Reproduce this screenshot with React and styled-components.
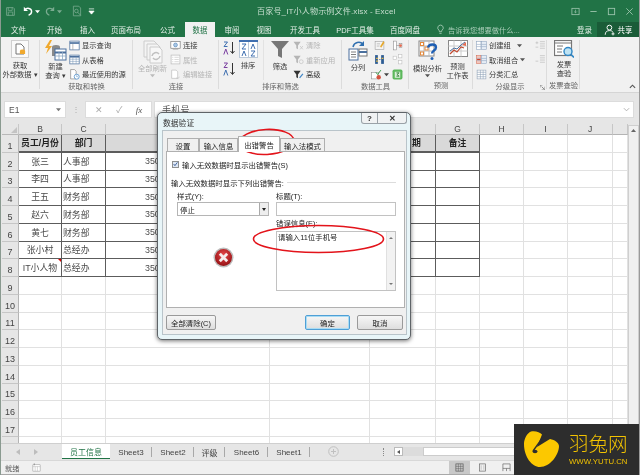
import React from "react";
import styled, { createGlobalStyle } from "styled-components";

const Global = createGlobalStyle`
  html, body { margin: 0; padding: 0; background: #fff; }
  * { box-sizing: border-box; }
  #root { width: 640px; height: 475px; overflow: hidden; }
`;
const cjk = `"Liberation Sans", "Noto Sans CJK SC", sans-serif`;

const Window = styled.div`
  position: relative; width: 640px; height: 475px; display: flex; flex-direction: column;
  font-family: ${cjk}; font-size: 7.3px; color: #3a3a3a; overflow: hidden; background: #e6e6e6;
  filter: blur(0.35px); border-left: 1px solid #8a9a90; border-right: 1px solid #9a9a9a;
`;
const TitleBar = styled.header`
  height: 22px; background: #217346; display: flex; align-items: center; position: relative; padding: 0 0 0 3px;
`;
const Qat = styled.div`display: flex; align-items: center; gap: 0;`;
const QatBtn = styled.span`
  width: ${p => p.$w}px; height: 14px; display: flex; align-items: center; justify-content: center;
  opacity: ${p => (p.$dim ? 0.4 : 1)};
`;
const DocTitle = styled.div`
  position: absolute; left: 256px; top: 5px; font-size: 8.1px; letter-spacing: .1px; color: #c9dfd1; white-space: nowrap;
`;
const WinControls = styled.div`margin-left: auto; display: flex; align-items: center; padding-right: 1px;`;
const WinBtn = styled.span`width: 18px; height: 18px; display: flex; align-items: center; justify-content: center;`;

const TabBar = styled.nav`height: 15px; background: #217346; display: flex; align-items: stretch;`;
const RibbonTab = styled.div`
  width: ${p => p.$w}px; display: flex; align-items: center; justify-content: center; white-space: nowrap;
  color: ${p => (p.$active ? "#217346" : "#e4efe8")}; background: ${p => (p.$active ? "#f1f1f1" : "transparent")};
  font-size: 7.5px;
`;
const TellMe = styled.div`
  display: flex; align-items: center; gap: 2px; margin-left: 4px; color: #a9cdb8; font-size: 7.3px; white-space: nowrap;
`;
const Login = styled.div`margin-left: auto; display: flex; align-items: center; color: #e4efe8; font-size: 7.5px; padding-right: 5px;`;
const Share = styled.div`
  width: 42px; background: #1a5c38; color: #fff; font-size: 7.5px; display: flex; align-items: center; justify-content: center; gap: 2px;
`;

const Ribbon = styled.section`height: 56px; background: #f1f1f1; display: flex; border-bottom: 1px solid #d5d5d5; position: relative;`;
const Group = styled.div`
  width: ${p => p.$w}px; display: flex; flex-direction: column; padding: 1px 0 1px; position: relative;
  &::after { content: ""; position: absolute; right: 0; top: 3px; bottom: 3px; width: 1px; background: #dcdcdc; }
`;
const GroupBody = styled.div`flex: 1; display: flex; padding-left: ${p => p.$pl || 0}px; gap: ${p => p.$gap || 0}px;`;
const GroupLabel = styled.div`height: 10px; line-height: 10px; text-align: center; color: #666; font-size: 7.3px; white-space: nowrap;`;
const BigBtn = styled.div`
  width: ${p => p.$w || 30}px; display: flex; flex-direction: column; align-items: center; flex: none; padding-top: 2px;
  line-height: 9px; font-size: 7.3px; text-align: center; color: ${p => (p.$dim ? "#b5b5b5" : "#3a3a3a")}; white-space: nowrap;
  svg { margin-bottom: ${p => p.$mb ?? 2}px; flex: none; }
`;
const Stack = styled.div`display: flex; flex-direction: column; justify-content: flex-start; flex: none; width: ${p => (p.$w ? p.$w + "px" : "auto")};`;
const SmallBtn = styled.div`
  height: 14.5px; display: flex; align-items: center; gap: 2px; white-space: nowrap; font-size: 7.3px;
  color: ${p => (p.$dim ? "#b5b5b5" : "#3a3a3a")};
`;
const Collapse = styled.span`position: absolute; right: 3px; bottom: 2px; display: flex;`;
const Launcher = styled.span`position: absolute; right: 2px; bottom: 2px; display: flex;`;
const Divider = styled.div`width: 1px; margin: 2px 4px 2px 5px; background: #e2e2e2; flex: none;`;

const FormulaBar = styled.section`height: 31px; background: #e6e6e6; padding: 8px 5px 6px 3px; display: flex; align-items: stretch;`;
const NameBox = styled.div`
  width: 62px; background: #fff; border: 1px solid #dcdcdc; display: flex; align-items: center; justify-content: space-between;
  padding: 0 4px; font-size: 8.5px; color: #555;
`;
const Grip = styled.div`width: 19px; display: flex; align-items: center; justify-content: center; color: #aaa; font-size: 8px;`;
const FxBox = styled.div`
  width: 67px; background: #fff; border: 1px solid #dcdcdc; display: flex; align-items: center; justify-content: space-around; padding: 0 2px;
  color: #aaa; font-size: 9px;
`;
const FormulaInput = styled.div`
  flex: 1; margin-left: 2px; background: #fff; border: 1px solid #dcdcdc; display: flex; align-items: center; justify-content: space-between;
  padding: 0 3px 0 7px; font-size: 9px; color: #555;
`;

const SheetArea = styled.section`height: 319px; display: flex; background: #e6e6e6; padding-left: 1px;`;
const SheetGrid = styled.div`
  display: grid; grid-template-columns: 17px 43px 44px 164px 100px 66px 44px 44px 44px 45px 15px;
  grid-template-rows: 11px repeat(18, 17.76px); height: 319px; overflow: hidden; background: #fff; width: 626px; flex: none;
`;
const Corner = styled.div`background: #e6e6e6; border-right: 1px solid #c8c8c8; border-bottom: 1px solid #b8b8b8; display: flex; align-items: flex-end; justify-content: flex-end; padding: 1px;`;
const ColHead = styled.div`
  background: #e6e6e6; border-right: 1px solid #c6c6c6; border-bottom: 1px solid #b4b4b4;
  display: flex; align-items: center; justify-content: center; font-size: 8.5px; color: #444;
`;
const RowHead = styled.div`
  background: #e6e6e6; border-right: 1px solid #b4b4b4; border-bottom: 1px solid #c6c6c6;
  display: flex; align-items: flex-end; justify-content: center; font-size: 9px; color: #444; padding-bottom: 1px;
`;
const Cell = styled.div`
  background: #fff; border-right: 1px solid #e1e1e1; border-bottom: 1px solid #e1e1e1; overflow: hidden; white-space: nowrap;
`;
const DataCell = styled.div`
  position: relative; background: ${p => (p.$head ? "#d9d9d9" : "#fff")}; color: ${p => (p.$head ? "#222" : "#4a4a4a")};
  font-weight: ${p => (p.$head ? 700 : 400)};
  border-right: 1.2px solid #5c5c5c; border-bottom: ${p => (p.$head ? 2 : 1.2)}px solid #5c5c5c;
  display: flex; align-items: center; justify-content: ${p => p.$align || "center"}; padding-left: ${p => p.$pl || 0}px;
  padding-right: ${p => p.$pr || 0}px; overflow: hidden; white-space: nowrap; font-size: 8.9px;
`;
const Comment = styled.span`
  position: absolute; top: 0; right: 0; width: 0; height: 0; border-top: 3px solid #d00; border-left: 3px solid transparent;
`;
const VScroll = styled.div`
  width: 11px; margin: 1px 0 0 0; background: #f0f0f0; border: 1px solid #cfcfcf; display: flex; flex-direction: column; align-items: center; padding-top: 3px;
`;

const SheetTabs = styled.nav`height: 17px; background: #e6e6e6; display: flex; align-items: stretch; border-top: 1px solid #cfcfcf;`;
const NavArrows = styled.div`width: 61px; display: flex; align-items: center; padding-left: 15px; gap: 14px;`;
const SheetTab = styled.div`
  width: ${p => p.$w}px; display: flex; align-items: center; justify-content: center; font-size: 8px;
  background: ${p => (p.$active ? "#fff" : "transparent")}; color: ${p => (p.$active ? "#217346" : "#444")};
  border-bottom: ${p => (p.$active ? "1.5px solid #217346" : "none")};
  margin-bottom: ${p => (p.$active ? 1 : 0)}px;
  position: relative;
  &::after { content: ""; display: ${p => (p.$active ? "none" : "block")}; position: absolute; right: 0; top: 3px; bottom: 3px; width: 1px; background: #a8a8a8; }
`;
const SheetTools = styled.div`flex: 1; display: flex; align-items: center; padding: 0 0 1px 18px;`;
const AddSheet = styled.span`width: 11px; height: 11px; display: flex;`;
const Dots = styled.span`width: 2px; height: 8px; margin-left: 44px; border-left: 1px dotted #888;`;
const ScrollArrow = styled.span`
  width: 9px; height: 9px; margin-left: 9px; background: #fff; border: 1px solid #bbb; display: flex; align-items: center; justify-content: center;
  &::after { content: ""; border-right: 3px solid #555; border-top: 2px solid transparent; border-bottom: 2px solid transparent; }
`;
const TrackGrey = styled.div`width: 20px; height: 9px; background: #dcdcdc;`;
const ThumbWhite = styled.div`flex: 1; height: 9px; background: #fff; border: 1px solid #ccc;`;

const StatusBar = styled.footer`
  height: 15px; background: #f0f0f0; border-top: 1px solid #d8d8d8; border-bottom: 1px solid #a8a8a8; display: flex; align-items: center; padding-left: 4px; font-size: 7.2px; color: #555;
`;
const StatusIcon = styled.span`margin-left: 13px; display: flex;`;
const ViewBtns = styled.div`margin-left: 408px; display: flex; align-self: stretch;`;
const ViewBtn = styled.span`
  width: ${p => (p.$on ? 21 : 24)}px; display: flex; align-items: center; justify-content: center; background: ${p => (p.$on ? "#c8c8c8" : "transparent")};
`;

/* Dialog */
const Dialog = styled.div`
  position: absolute; left: 156px; top: 112px; width: 254px; height: 228px; border: 1px solid #5f6468; border-radius: 5px;
  background: #e8f5f8; box-shadow: 0 1px 4px rgba(0,0,0,.55); padding: 0 3px 4px 4px; display: flex; flex-direction: column; color: #222;
`;
const DlgTitleRow = styled.div`height: 17px; display: flex; align-items: flex-start; justify-content: space-between; flex: none;`;
const DlgTitle = styled.div`font-size: 7.8px; padding: 4px 0 0 1px; color: #333;`;
const DlgCtrls = styled.div`display: flex;`;
const DlgCtrl = styled.span`
  width: ${p => p.$w}px; height: 11px; display: flex; align-items: center; justify-content: center; background: #f0f2f3;
  border: 1px solid #9aa2a8; border-top: none; border-left: ${p => (p.$first ? "1px solid #9aa2a8" : "none")};
  border-radius: ${p => (p.$first ? "0 0 0 3px" : "0 0 3px 0")}; font-size: 8px; color: #333; font-weight: 700;
`;
const DlgBody = styled.div`flex: 1; background: #f0f0f0; border: 1px solid #b9c4ca; padding: 5px 1px 4px 3px; display: flex; flex-direction: column;`;
const DlgTabs = styled.div`display: flex; align-items: flex-end; height: 16px; flex: none; padding-left: 1px; position: relative; z-index: 1;`;
const DlgTab = styled.div`
  width: ${p => p.$w}px; height: ${p => (p.$active ? 16 : 14)}px; background: ${p => (p.$active ? "#fff" : "#f0f0f0")};
  border: 1px solid #b0b0b0; border-bottom: ${p => (p.$active ? "none" : "1px solid #b0b0b0")};
  display: flex; align-items: center; justify-content: center; font-size: 7.4px; color: #222; white-space: nowrap;
`;
const DlgPanel = styled.div`
  height: 157px; margin-top: -1px; background: #fff; border: 1px solid #b0b0b0; padding: 8px 8px 0 4px; display: flex; flex-direction: column; flex: none; font-size: 7.4px;
`;
const CheckRow = styled.label`display: flex; align-items: center; gap: 3px; height: 8px; white-space: nowrap;`;
const CheckBox = styled.span`
  width: 7px; height: 7px; border: 1px solid #8e8f8f; background: #dfe8f5; display: flex; align-items: center; justify-content: center; margin-left: 1px;
`;
const Legend = styled.div`display: flex; align-items: center; gap: 3px; margin-top: 9px; height: 10px; white-space: nowrap;`;
const LegendRule = styled.span`flex: 1; height: 1px; background: #dcdcdc;`;
const FormCols = styled.div`display: flex; padding-left: 6px; gap: 7px; margin-top: 4px;`;
const LeftCol = styled.div`width: 92px; display: flex; flex-direction: column; flex: none;`;
const RightCol = styled.div`flex: 1; display: flex; flex-direction: column;`;
const FieldLabel = styled.div`height: 11px; line-height: 11px; margin-top: ${p => p.$mt || 0}px; margin-bottom: ${p => p.$mb || 0}px; color: #222;`;
const Select = styled.div`
  height: 14px; border: 1px solid #b5b5b5; display: flex; align-items: center; justify-content: space-between; padding-left: 2px; background: #fff;
`;
const SelectArrow = styled.span`
  width: 9px; height: 12px; background: #eee; border-left: 1px solid #aaa; display: flex; align-items: center; justify-content: center;
  &::after { content: ""; border-top: 3px solid #222; border-left: 2.5px solid transparent; border-right: 2.5px solid transparent; }
`;
const TextInput = styled.div`height: 14px; border: 1px solid #c2c2c2; background: #fff;`;
const TextArea = styled.div`
  height: 60px; border: 1px solid #c2c2c2; background: #fff; display: flex; justify-content: space-between; padding-left: 1px; padding-top: 1px; line-height: 10px;
`;
const AreaScroll = styled.span`
  width: 9px; margin-top: -1px; background: #f2f2f2; border-left: 1px solid #e0e0e0; display: flex; flex-direction: column; align-items: center; justify-content: space-between; padding: 5px 0;
  i { display: block; width: 0; height: 0; border-left: 2px solid transparent; border-right: 2px solid transparent; }
  i:first-child { border-bottom: 2.5px solid #777; }
  i:last-child { border-top: 2.5px solid #777; }
`;
const ErrorMark = styled.div`margin: 31px 0 0 36px; width: 21px; height: 21px; display: flex;`;
const DlgFooter = styled.div`display: flex; align-items: flex-start; margin-top: 7px; padding-right: 2px;`;
const DlgBtn = styled.button`
  font: inherit; font-size: 7.4px; color: #222; width: ${p => p.$w}px; height: 15px; padding: 0; margin-left: ${p => p.$ml || 0}px; border-radius: 2px;
  border: 1px solid ${p => (p.$primary ? "#4f9fd6" : "#9a9a9a")};
  background: linear-gradient(#f6f6f6, #dedede);
  box-shadow: ${p => (p.$primary ? "inset 0 0 0 1px #a9dcf4" : "none")};
`;
const Annot = styled.svg`position: absolute; pointer-events: none; overflow: visible;`;

/* Logo watermark */
const Logo = styled.div`
  position: absolute; right: -1px; bottom: 0; width: 126px; height: 51px; background: #2d2d2d; display: flex; align-items: center; padding-left: 10px; gap: 9px;
`;
const LogoText = styled.div`display: flex; flex-direction: column; color: #f3c300; align-items: center;`;
const LogoCn = styled.div`font-size: 19.5px; line-height: 23px; font-weight: 300; white-space: nowrap;`;
const LogoEn = styled.div`font-size: 7.8px; line-height: 10px; white-space: nowrap; margin-top: 1px;`;

const I = ({ s = 12, w, h, vb, children }) => (
  <svg width={w || s} height={h || s} viewBox={vb || "0 0 20 20"} fill="none">{children}</svg>
);

const SaveI = () => <I s={11}><path d="M3 3h12l2 2v12H3z" stroke="#fff" strokeWidth="1.5"/><path d="M6 3v5h7V3M6 17v-6h8v6" stroke="#fff" strokeWidth="1.3"/></I>;
const UndoI = ({ c = "#fff" }) => <I s={12}><path d="M5 8c3-4 11-3 11 3 0 3-2 5-5 6" stroke={c} strokeWidth="2.4"/><path d="M3 3v7h7z" fill={c}/></I>;
const RedoI = () => <I s={12}><path d="M15 8c-3-4-11-3-11 3 0 3 2 5 5 6" stroke="#fff" strokeWidth="2"/><path d="M17 3v7h-7z" fill="#fff"/></I>;
const Caret = ({ c = "#fff", s = 5 }) => <I s={s} vb="0 0 6 6"><path d="M0 1.5h6L3 5z" fill={c}/></I>;
const PreviewI = () => <I s={12}><path d="M4 2h9l3 3v13H4z" stroke="#fff" strokeWidth="1.3"/><circle cx="9" cy="10" r="3" stroke="#fff" strokeWidth="1.3"/><path d="M11 12l5 5" stroke="#fff" strokeWidth="1.5"/></I>;
const CustomizeI = () => <I s={7} vb="0 0 8 8"><path d="M1 1h6M1 3.5h6L4 7z" stroke="#fff" fill="#fff" strokeWidth=".8"/></I>;
const BulbI = () => <I s={11}><path d="M10 2a5 5 0 0 0-3 9c1 1 1 2 1 3h4c0-1 0-2 1-3a5 5 0 0 0-3-9zM8 17h4" stroke="#b5d5c2" strokeWidth="1.4"/></I>;
const UserI = () => <I s={12}><circle cx="9" cy="6" r="4" stroke="#fff" strokeWidth="1.6"/><path d="M2 18c0-5 3-7 7-7s5 1 6 3M15 14v5M12.5 16.5h5" stroke="#fff" strokeWidth="1.5"/></I>;

const ExtData = () => (
  <svg width="18" height="18" viewBox="0 0 18 18" fill="none"><rect x=".5" y=".5" width="17" height="17" fill="#fafafa" stroke="#d0d0d0"/><path d="M5 4h5l3 3v7H5z" fill="#fff" stroke="#777"/><ellipse cx="11.5" cy="11" rx="2.6" ry="1.4" fill="#f0a92e"/><rect x="8.9" y="11" width="5.2" height="3" fill="#f0a92e"/></svg>
);
const NewQuery = () => (
  <svg width="22" height="22" viewBox="0 0 22 22" fill="none">
    <path d="M5 0 0 8h3L1 14l6-8H4l3-6z" fill="#f0a92e"/>
    <ellipse cx="11" cy="7" rx="4" ry="2" fill="#8a8a8a"/><rect x="7" y="7" width="8" height="9" fill="#8a8a8a"/>
    <rect x="10" y="9" width="11" height="11" fill="#fff" stroke="#4a6f9d"/><path d="M10 12.5h11" stroke="#4a6f9d" strokeWidth="2"/><path d="M10 16h11M14 12v8M17.500 12v8" stroke="#8fa9c4" strokeWidth=".8"/>
  </svg>
);
const Small = ({ k }) => {
  if (k === "query") return <I s={11}><rect x="1.500" y="2" width="17" height="16" fill="#fff" stroke="#4a6f9d" strokeWidth="1.3"/><path d="M1.500 5.500h17" stroke="#4a6f9d" strokeWidth="3"/><path d="M7 7v11" stroke="#888"/></I>;
  if (k === "table") return <I s={11}><rect x="1.500" y="2" width="17" height="16" fill="#fff" stroke="#4a6f9d" strokeWidth="1.3"/><path d="M1.500 5h17" stroke="#4a6f9d" strokeWidth="3"/><path d="M1.500 9.500h17M1.500 13.500h17M7 5v13M13 5v13" stroke="#7f9cbb"/></I>;
  if (k === "recent") return <I s={11}><path d="M3 1h7l3 3v14H3z" fill="#fff" stroke="#666"/><circle cx="14" cy="14" r="4.500" fill="#fff" stroke="#3f85c6" strokeWidth="1.300"/><path d="M14 11.500V14h2" stroke="#3f85c6"/></I>;
  if (k === "conn") return <I s={11}><rect x="1.500" y="3" width="17" height="12" fill="#fff" stroke="#777" strokeWidth="1.200"/><circle cx="10" cy="9" r="3.500" fill="#a9c8e6" stroke="#4a7bb0"/><path d="M5 17h10" stroke="#999"/></I>;
  if (k === "props") return <I s={11}><rect x="2" y="2" width="16" height="16" fill="#fff" stroke="#bbb" strokeWidth="1.300"/><path d="M8 6h8M8 10h8M8 14h8M4 6h2M4 10h2M4 14h2" stroke="#bbb"/></I>;
  if (k === "edit") return <I s={11}><path d="M3 2h8l3 3v12H3z" fill="#fff" stroke="#bbb" strokeWidth="1.200"/><path d="M11 16c2 2 6 1 6-2" stroke="#bbb"/></I>;
  if (k === "clear") return <I s={11}><path d="M1 3h13L9 10v7l-3-2v-5z" fill="#b5b5b5"/><path d="M13 11l5 6M18 11l-5 6" stroke="#c8c8c8" strokeWidth="1.500"/></I>;
  if (k === "reapply") return <I s={11}><path d="M1 3h13L9 10v7l-3-2v-5z" fill="#b5b5b5"/><circle cx="15" cy="14" r="3.500" stroke="#c0c0c0" strokeWidth="1.200"/></I>;
  if (k === "adv") return <I s={11}><path d="M1 3h13L9 10v7l-3-2v-5z" fill="#333"/><path d="M12 16l6-7" stroke="#3f85c6" strokeWidth="2.200"/></I>;
  if (k === "group") return <I s={11}><rect x="1" y="3" width="8" height="14" fill="#fff" stroke="#8ba2bd"/><path d="M1 8h8M1 12h8" stroke="#8ba2bd"/><rect x="10" y="3" width="9" height="14" fill="#e6edf5" stroke="#8ba2bd"/><path d="M10 8h9M10 12h9" stroke="#8ba2bd"/></I>;
  if (k === "ungroup") return <I s={11}><rect x="1" y="3" width="8" height="14" fill="#f3c7bd" stroke="#d56a50"/><rect x="10" y="3" width="9" height="14" fill="#e6edf5" stroke="#8ba2bd"/><path d="M10 8h9M10 12h9M1 8h8M1 12h8" stroke="#8ba2bd"/><path d="M2 10h6" stroke="#c9402b" strokeWidth="2"/></I>;
  if (k === "sub") return <I s={11}><rect x="2" y="2" width="16" height="16" fill="#fff" stroke="#8a9db3"/><path d="M2 6h16M2 10h16M2 14h16M8 2v16M13 2v16" stroke="#8a9db3"/></I>;
  return null;
};
const SortAZ = ({ rev }) => (
  <svg width="13" height="14" viewBox="0 0 13 14" fill="none">
    <path d="M1 1h3.500L1 5.500h3.500" stroke={rev ? "#7a3fa0" : "#3f6fb0"}/>
    <path d="M.8 13.500L2.800 8l2 5.500" stroke={rev ? "#3f6fb0" : "#7a3fa0"}/>
    <path d="M9.500 1v11M7.500 10l2 2.500 2-2.500" stroke="#333"/>
  </svg>
);
const SortBig = () => (
  <svg width="19" height="18" viewBox="0 0 19 18" fill="none">
    <rect x=".5" y=".5" width="18" height="17" fill="#fff" stroke="#bcc9d8"/><path d="M0 1h19" stroke="#3f6fb0" strokeWidth="2"/><path d="M9.500 2v15" stroke="#bcc9d8"/>
    <path d="M3 4h4L3 9h4M3 16l2-5 2 5M12 9l2-5 2 5M12 11h4l-4 5h4" stroke="#3f6fb0" strokeWidth="1"/>
  </svg>
);
const Funnel = () => <svg width="19" height="19" viewBox="0 0 19 19"><path d="M0 1h18L11 9v9l-4-2V9z" fill="#777"/></svg>;
const Refresh = () => (
  <svg width="20" height="24" viewBox="0 0 20 24" fill="none"><path d="M1 1h10l3 3v13H1z" fill="#f4f4f4" stroke="#ccc"/><path d="M4 4h10l3 3v13H4z" fill="#f4f4f4" stroke="#ccc"/><path d="M7 7h9l3 3v13H7z" fill="#f7f7f7" stroke="#ccc"/><path d="M9 16a4 4 0 0 1 7-2M17 16a4 4 0 0 1-7 2" stroke="#c0c0c0" strokeWidth="1.500"/></svg>
);
const TextCols = () => (
  <svg width="20" height="21" viewBox="0 0 20 21" fill="none"><path d="M5 7C6 2 12 1 15 4" stroke="#2f6fb0" strokeWidth="1.500"/><path d="M16 1v5h-5z" fill="#2f6fb0"/><rect x="1" y="9" width="9" height="11" fill="#fff" stroke="#4a6f9d"/><path d="M3 12h5M3 14.500h5M3 17h5" stroke="#7e7e7e"/><rect x="11" y="9" width="8" height="7" fill="#fff" stroke="#777"/><path d="M11 12h8" stroke="#4a6f9d" strokeWidth="2"/></svg>
);
const Tool = ({ k }) => {
  if (k === "flash") return <I s={11}><rect x="2" y="3" width="16" height="14" fill="#f4f4f4" stroke="#999"/><path d="M5 7h6M5 11h5" stroke="#999"/><path d="M17 2l-6 10 2 2 6-9z" fill="#e6a92e"/></I>;
  if (k === "dup") return <I s={11}><rect x="2" y="2" width="5" height="16" fill="#2d5c94"/><rect x="13" y="2" width="5" height="16" fill="#2d5c94"/><path d="M4 8h3M14 8h3M4 13h3" stroke="#f0c040" strokeWidth="2"/><path d="M9 10h3" stroke="#444"/></I>;
  if (k === "valid") return <I s={11}><rect x="1" y="6" width="13" height="12" fill="#fff" stroke="#888"/><path d="M9 6l3 4 6-8" stroke="#3a9a4a" strokeWidth="1.800"/><circle cx="14" cy="15" r="4" fill="#d4533f"/></I>;
  if (k === "cons") return <I s={11}><rect x="3" y="2" width="5" height="16" fill="#fff" stroke="#888"/><rect x="13" y="6" width="5" height="8" fill="#fff" stroke="#888"/><path d="M8 10h5" stroke="#888"/><circle cx="15.500" cy="10" r="2.500" fill="#e36c52"/></I>;
  if (k === "rel") return <I s={11}><rect x="2" y="4" width="6" height="6" stroke="#bbb" fill="#fff"/><rect x="12" y="1" width="6" height="6" stroke="#bbb" fill="#fff"/><rect x="12" y="12" width="6" height="6" stroke="#bbb" fill="#fff"/></I>;
  if (k === "model") return <I s={11}><rect x="1" y="1" width="18" height="18" rx="3" fill="#5cb85c"/><path d="M5 5h10v11H5z" fill="#d7efd7"/><path d="M8 7h5l-4 3 4 3H8" stroke="#2e7d32" strokeWidth="1.500"/></I>;
  return null;
};
const WhatIf = () => (
  <svg width="20" height="21" viewBox="0 0 20 21" fill="none"><rect x="1" y="1" width="15" height="15" fill="#fff" stroke="#888"/><path d="M1 6h15M1 11h15M6 1v15M11 1v15" stroke="#bbb"/><rect x="2.500" y="2.500" width="3" height="3" stroke="#e58a3c"/><rect x="7" y="7" width="3" height="3" stroke="#e58a3c"/><rect x="2.500" y="12" width="3" height="3" stroke="#e58a3c"/><path d="M10 7.500c1-4 8-4 8 0 0 3-4 3-4 6" stroke="#1f5fb4" strokeWidth="2.300"/><circle cx="14" cy="18.500" r="1.500" fill="#1f5fb4"/></svg>
);
const Forecast = () => (
  <svg width="20" height="19" viewBox="0 0 20 19" fill="none"><rect x=".5" y=".5" width="19" height="16" fill="#fff" stroke="#888"/><path d="M.5 6h19M.5 11h19M6 .5v16M13 .5v16" stroke="#ccc"/><path d="M2 14l4-4 3 2 4-5 3 1" stroke="#c2492f" strokeWidth="1.200"/><path d="M2 11l4-3 3 1 4-4 4-3" stroke="#4a6f9d"/><path d="M14 5l4-3v4z" fill="#e36c52"/></svg>
);
const ExtraA = ({ flip }) => <I s={11}><path d="M9 3h9M9 7h9M9 11h9M9 15h9" stroke="#c5c5c5" strokeWidth="1.500"/><path d="M1 5h5M3.500 2.500v5" stroke={flip ? "transparent" : "#c5c5c5"} strokeWidth="1.500"/><path d="M1 13h5" stroke="#c5c5c5" strokeWidth="1.500"/></I>;
const Invoice = () => (
  <svg width="20" height="18" viewBox="0 0 20 18" fill="none"><rect x=".5" y=".5" width="17" height="15" fill="#fff" stroke="#777" strokeWidth="1.200"/><path d="M.5 3h17" stroke="#777"/><path d="M3 6h6M3 9h5M3 12h5" stroke="#777"/><circle cx="14" cy="11.500" r="4" fill="#bfe3f3" stroke="#2f87c6" strokeWidth="1.400"/><path d="M17 14.500l3 3" stroke="#2f87c6" strokeWidth="1.600"/></svg>
);
const ErrorIcon = () => (
  <svg width="21" height="21" viewBox="0 0 21 21"><defs><radialGradient id="eg" cx=".5" cy=".35" r=".7"><stop offset="0" stopColor="#e8474a"/><stop offset="1" stopColor="#8e0d10"/></radialGradient></defs>
    <circle cx="10.500" cy="10.500" r="10" fill="#bdbdbd"/><circle cx="10.500" cy="10.500" r="8.500" fill="url(#eg)"/><path d="M6.800 6.800l7.400 7.400M14.200 6.800l-7.400 7.400" stroke="#f5eded" strokeWidth="2.800"/></svg>
);

const rowsData = [
  ["张三", "人事部"], ["李四", "人事部"], ["王五", "财务部"], ["赵六", "财务部"], ["黄七", "财务部"], ["张小村", "总经办"], ["IT小人物", "总经办"],
];
const cols = ["B", "C", "D", "E", "F", "G", "H", "I", "J"];

const Sheet = () => (
  <SheetGrid>
    <Corner><svg width="6" height="6"><path d="M6 0v6H0z" fill="#c4c4c4"/></svg></Corner>
    {cols.map(c => <ColHead key={c}>{["D", "E", "F"].includes(c) ? "" : c}</ColHead>)}
    <ColHead />
    <RowHead>1</RowHead>
    <DataCell $head>员工/月份</DataCell>
    <DataCell $head>部门</DataCell>
    <DataCell $head />
    <DataCell $head />
    <DataCell $head $align="flex-end" $pr={14}>入职日期</DataCell>
    <DataCell $head>备注</DataCell>
    <Cell /><Cell /><Cell /><Cell />
    {rowsData.map((r, i) => (
      <React.Fragment key={i}>
        <RowHead>{i + 2}</RowHead>
        <DataCell>{r[0]}{i === 6 && <Comment />}</DataCell>
        <DataCell $align="flex-start" $pl={1}>{r[1]}</DataCell>
        <DataCell $align="flex-start" $pl={39}>3506</DataCell>
        <DataCell /><DataCell /><DataCell />
        <Cell /><Cell /><Cell /><Cell />
      </React.Fragment>
    ))}
    {Array.from({ length: 10 }, (_, i) => (
      <React.Fragment key={i}>
        <RowHead>{i < 9 ? i + 9 : ""}</RowHead>
        {Array.from({ length: 10 }, (_, j) => <Cell key={j} />)}
      </React.Fragment>
    ))}
  </SheetGrid>
);

export default function App() {
  return (
    <Window>
      <Global />
      <TitleBar>
        <Qat>
          <QatBtn $w={12} $dim><SaveI /></QatBtn>
          <QatBtn $w={6} />
          <QatBtn $w={12}><UndoI /></QatBtn>
          <QatBtn $w={6}><Caret /></QatBtn>
          <QatBtn $w={4} />
          <QatBtn $w={12} $dim><RedoI /></QatBtn>
          <QatBtn $w={6} $dim><Caret /></QatBtn>
          <QatBtn $w={9} />
          <QatBtn $w={12} $dim><PreviewI /></QatBtn>
          <QatBtn $w={4} />
          <QatBtn $w={8}><CustomizeI /></QatBtn>
        </Qat>
        <DocTitle>百家号_IT小人物示例文件.xlsx - Excel</DocTitle>
        <WinControls>
          <WinBtn><I s={9}><rect x="2" y="3" width="16" height="14" stroke="#9cc4ac" strokeWidth="1.800"/><path d="M10 6v7M7 10l3 3 3-3" stroke="#9cc4ac" strokeWidth="1.500"/></I></WinBtn>
          <WinBtn><I s={9}><path d="M3 10h14" stroke="#9cc4ac" strokeWidth="2"/></I></WinBtn>
          <WinBtn><I s={9}><rect x="3" y="3" width="14" height="14" stroke="#9cc4ac" strokeWidth="2"/></I></WinBtn>
          <WinBtn><I s={9}><path d="M3 3l14 14M17 3L3 17" stroke="#9cc4ac" strokeWidth="2"/></I></WinBtn>
        </WinControls>
      </TitleBar>
      <TabBar>
        <RibbonTab $w={35}>文件</RibbonTab>
        <RibbonTab $w={37}>开始</RibbonTab>
        <RibbonTab $w={29}>插入</RibbonTab>
        <RibbonTab $w={48}>页面布局</RibbonTab>
        <RibbonTab $w={35}>公式</RibbonTab>
        <RibbonTab $w={30} $active>数据</RibbonTab>
        <RibbonTab $w={34}>审阅</RibbonTab>
        <RibbonTab $w={30}>视图</RibbonTab>
        <RibbonTab $w={52}>开发工具</RibbonTab>
        <RibbonTab $w={48}>PDF工具集</RibbonTab>
        <RibbonTab $w={52}>百度网盘</RibbonTab>
        <TellMe><BulbI />告诉我您想要做什么...</TellMe>
        <Login>登录</Login>
        <Share><UserI />共享</Share>
      </TabBar>
      <Ribbon>
        <Group $w={39}>
          <GroupBody $pl={4}>
            <BigBtn $w={30} $mb={3}><ExtData />获取<br />外部数据 ▾</BigBtn>
          </GroupBody>
          <GroupLabel />
        </Group>
        <Group $w={93}>
          <GroupBody $pl={2}>
            <BigBtn $w={27} $mb={0}><NewQuery />新建<br />查询 ▾</BigBtn>
            <Stack>
              <SmallBtn><Small k="query" />显示查询</SmallBtn>
              <SmallBtn><Small k="table" />从表格</SmallBtn>
              <SmallBtn><Small k="recent" />最近使用的源</SmallBtn>
            </Stack>
          </GroupBody>
          <GroupLabel>获取和转换</GroupLabel>
        </Group>
        <Group $w={86}>
          <GroupBody $pl={4}>
            <BigBtn $w={31} $dim $mb={0}><Refresh />全部刷新<Caret c="#bbb" /></BigBtn>
            <Stack style={{ marginLeft: 2 }}>
              <SmallBtn><Small k="conn" />连接</SmallBtn>
              <SmallBtn $dim><Small k="props" />属性</SmallBtn>
              <SmallBtn $dim><Small k="edit" />编辑链接</SmallBtn>
            </Stack>
          </GroupBody>
          <GroupLabel>连接</GroupLabel>
        </Group>
        <Group $w={123}>
          <GroupBody $pl={4}>
            <Stack $w={15} style={{ paddingTop: 3, gap: 7 }}><SortAZ /><SortAZ rev /></Stack>
            <BigBtn $w={20} $mb={3}><SortBig />排序</BigBtn>
            <Divider />
            <BigBtn $w={24} $mb={3}><Funnel />筛选</BigBtn>
            <Stack style={{ marginLeft: 1 }}>
              <SmallBtn $dim><Small k="clear" />清除</SmallBtn>
              <SmallBtn $dim><Small k="reapply" />重新应用</SmallBtn>
              <SmallBtn><Small k="adv" />高级</SmallBtn>
            </Stack>
          </GroupBody>
          <GroupLabel>排序和筛选</GroupLabel>
        </Group>
        <Group $w={67}>
          <GroupBody $pl={5}>
            <BigBtn $w={22} $mb={2}><TextCols />分列</BigBtn>
            <Stack $w={21} style={{ alignItems: "center" }}>
              <SmallBtn><Tool k="flash" /></SmallBtn>
              <SmallBtn><Tool k="dup" /></SmallBtn>
              <SmallBtn><Tool k="valid" /><Caret c="#444" /></SmallBtn>
            </Stack>
            <Stack $w={15} style={{ alignItems: "center" }}>
              <SmallBtn><Tool k="cons" /></SmallBtn>
              <SmallBtn><Tool k="rel" /></SmallBtn>
              <SmallBtn><Tool k="model" /></SmallBtn>
            </Stack>
          </GroupBody>
          <GroupLabel>数据工具</GroupLabel>
        </Group>
        <Group $w={64}>
          <GroupBody $pl={2}>
            <BigBtn $w={33} $mb={3}><WhatIf />模拟分析<Caret c="#555" /></BigBtn>
            <BigBtn $w={27} $mb={3}><Forecast />预测<br />工作表</BigBtn>
          </GroupBody>
          <GroupLabel>预测</GroupLabel>
        </Group>
        <Group $w={74}>
          <GroupBody $pl={3}>
            <Stack $w={52}>
              <SmallBtn><Small k="group" />创建组 &nbsp;<Caret c="#555" /></SmallBtn>
              <SmallBtn><Small k="ungroup" />取消组合 <Caret c="#555" /></SmallBtn>
              <SmallBtn><Small k="sub" />分类汇总</SmallBtn>
            </Stack>
            <Stack style={{ marginLeft: 7 }}>
              <SmallBtn><ExtraA /></SmallBtn>
              <SmallBtn><ExtraA flip /></SmallBtn>
            </Stack>
          </GroupBody>
          <GroupLabel>分级显示</GroupLabel>
          <Launcher><I s={5} vb="0 0 6 6"><path d="M0 0h3M0 0v3M6 2v4H2M2 2l3 3" stroke="#777"/></I></Launcher>
        </Group>
        <Group $w={33}>
          <GroupBody $pl={6}>
            <BigBtn $w={22} $mb={2}><Invoice />发票<br />查验</BigBtn>
          </GroupBody>
          <GroupLabel>发票查验</GroupLabel>
        </Group>
        <Collapse><I s={7} vb="0 0 8 8"><path d="M1 5.500l3-3 3 3" stroke="#555" strokeWidth="1.300"/></I></Collapse>
      </Ribbon>
      <FormulaBar>
        <NameBox>E1<Caret c="#777" /></NameBox>
        <Grip>⋮</Grip>
        <FxBox><span>✕</span><span>✓</span><span style={{ fontStyle: "italic", fontFamily: "Liberation Serif", color: "#555" }}>fx</span></FxBox>
        <FormulaInput><span style={{ letterSpacing: 0.3 }}>手机号</span><I s={7} vb="0 0 8 8"><path d="M1 2.500l3 3 3-3" stroke="#aaa"/></I></FormulaInput>
      </FormulaBar>
      <SheetArea>
        <Sheet />
        <VScroll><svg width="5" height="3"><path d="M0 3l2.500-3 2.500 3z" fill="#666"/></svg></VScroll>
      </SheetArea>
      <SheetTabs>
        <NavArrows>
          <svg width="4" height="6"><path d="M4 0v6L0 3z" fill="#bdbdbd"/></svg>
          <svg width="4" height="6"><path d="M0 0v6l4-3z" fill="#bdbdbd"/></svg>
        </NavArrows>
        <SheetTab $w={48} $active>员工信息</SheetTab>
        <SheetTab $w={42}>Sheet3</SheetTab>
        <SheetTab $w={42}>Sheet2</SheetTab>
        <SheetTab $w={31}>评级</SheetTab>
        <SheetTab $w={43}>Sheet6</SheetTab>
        <SheetTab $w={42}>Sheet1</SheetTab>
        <SheetTools>
          <AddSheet><svg width="11" height="11" viewBox="0 0 11 11" fill="none"><circle cx="5.500" cy="5.500" r="4.800" stroke="#c0c0c0"/><path d="M5.500 3v5M3 5.500h5" stroke="#c0c0c0"/></svg></AddSheet>
          <Dots />
          <ScrollArrow />
          <TrackGrey />
          <ThumbWhite />
        </SheetTools>
      </SheetTabs>
      <StatusBar>
        <span>就绪</span>
        <StatusIcon><I s={9}><rect x="2" y="4" width="16" height="14" fill="#fff" stroke="#888"/><path d="M2 8h16M7 8v10M12 8v10" stroke="#aaa"/><path d="M5 1v4" stroke="#888" strokeWidth="2"/></I></StatusIcon>
        <ViewBtns>
          <ViewBtn $on><I s={9}><rect x="2" y="2" width="16" height="16" stroke="#555" strokeWidth="1.500"/><path d="M2 7.500h16M2 12.500h16M7.500 2v16M12.500 2v16" stroke="#555"/></I></ViewBtn>
          <ViewBtn><I s={9}><rect x="3" y="2" width="14" height="16" stroke="#666" strokeWidth="1.500"/><path d="M7 5v10M13 5v10" stroke="#999"/></I></ViewBtn>
          <ViewBtn><I s={9}><path d="M2 18V2h16v16M2 12h16M10 12v6" stroke="#666" strokeWidth="1.500"/></I></ViewBtn>
        </ViewBtns>
      </StatusBar>

      <Dialog>
        <DlgTitleRow>
          <DlgTitle>数据验证</DlgTitle>
          <DlgCtrls>
            <DlgCtrl $w={17} $first>?</DlgCtrl>
            <DlgCtrl $w={29}>✕</DlgCtrl>
          </DlgCtrls>
        </DlgTitleRow>
        <DlgBody>
          <DlgTabs>
            <DlgTab $w={32}>设置</DlgTab>
            <DlgTab $w={39}>输入信息</DlgTab>
            <DlgTab $w={42} $active>出错警告</DlgTab>
            <DlgTab $w={45}>输入法模式</DlgTab>
          </DlgTabs>
          <DlgPanel>
            <CheckRow>
              <CheckBox><svg width="6" height="6" viewBox="0 0 6 6"><path d="M.8 3l1.500 2L5.300 1" stroke="#2a4f8f" fill="none" strokeWidth="1"/></svg></CheckBox>
              输入无效数据时显示出错警告(S)
            </CheckRow>
            <Legend>输入无效数据时显示下列出错警告:<LegendRule /></Legend>
            <FormCols>
              <LeftCol>
                <FieldLabel>样式(Y):</FieldLabel>
                <Select>停止<SelectArrow /></Select>
                <ErrorMark><ErrorIcon /></ErrorMark>
              </LeftCol>
              <RightCol>
                <FieldLabel>标题(T):</FieldLabel>
                <TextInput />
                <FieldLabel $mt={2} $mb={2}>错误信息(E):</FieldLabel>
                <TextArea>请输入11位手机号<AreaScroll><i /><i /></AreaScroll></TextArea>
              </RightCol>
            </FormCols>
          </DlgPanel>
          <DlgFooter>
            <DlgBtn $w={50}>全部清除(C)</DlgBtn>
            <DlgBtn $w={45} $ml={89} $primary>确定</DlgBtn>
            <DlgBtn $w={46} $ml={7}>取消</DlgBtn>
          </DlgFooter>
        </DlgBody>
      </Dialog>
      <Annot style={{ left: 237, top: 128 }} width="58" height="28">
        <ellipse cx="28.500" cy="14" rx="27.500" ry="12.500" fill="none" stroke="#e3141b" strokeWidth="1.600" transform="rotate(-3 28 14)" />
      </Annot>
      <Annot style={{ left: 251, top: 224 }} width="134" height="30">
        <ellipse cx="66.500" cy="15" rx="65" ry="13.500" fill="none" stroke="#e3141b" strokeWidth="1.600" />
      </Annot>

      <Logo>
        <svg width="36" height="37" viewBox="0 0 36 37">
          <path d="M7 .5C11-.5 16 1 18 3.500L13 16 26 8C31 9 35 12 35 15 35 24 26 36 16 36 8 36 0 26 0 13 0 8 3 2 7 .5Z" fill="#fcc800"/>
          <path d="M9 20L22 2" stroke="#2d2d2d" strokeWidth="1.300"/>
          <ellipse cx="11" cy="20.500" rx="2.500" ry="1.700" fill="#2d2d2d"/>
        </svg>
        <LogoText>
          <LogoCn>羽兔网</LogoCn>
          <LogoEn>WWW.YUTU.CN</LogoEn>
        </LogoText>
      </Logo>
    </Window>
  );
}
